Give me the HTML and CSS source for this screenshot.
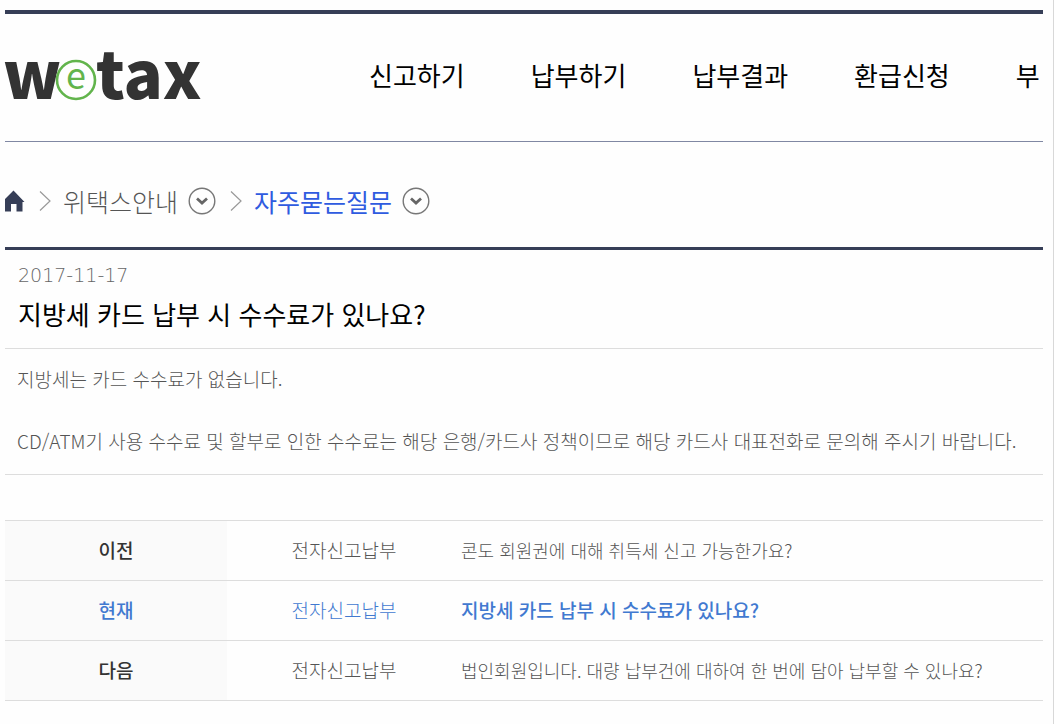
FILE: index.html
```html
<!DOCTYPE html>
<html lang="ko">
<head>
    <meta charset="UTF-8">
    <title>자주묻는질문 - wetax</title>
    <link rel="stylesheet" href="styles.css">
</head>
<body>
    <div class="page">
        <header class="header">
            <a href="#" class="logo" aria-label="wetax">
                <svg width="204" height="120" viewBox="0 0 204 120">
                    <text class="logo-dark" x="-2" y="81">w</text>
                    <circle cx="71" cy="62" r="20" fill="#fefefe"/>
                    <circle cx="71" cy="62" r="19" fill="none" stroke="#62b44c" stroke-width="2.600"/>
                    <text class="logo-e" x="71" y="71" text-anchor="middle">e</text>
                    <text class="logo-dark" x="91" y="81">tax</text>
                </svg>
            </a>
            <nav class="nav">
                <a href="#">신고하기</a>
                <a href="#">납부하기</a>
                <a href="#">납부결과</a>
                <a href="#">환급신청</a>
                <a href="#">부</a>
            </nav>
        </header>

        <nav class="path">
            <a href="#" class="home" aria-label="홈">
                <svg width="20" height="22" viewBox="0 0 20 22"><path d="M8.500 0.500L19.500 12H17.500V21.500H11.500V14H6V21.500H-1V10z" fill="#363e57"/></svg>
            </a>
            <svg class="sep" width="12" height="22" viewBox="0 0 12 22"><path d="M1 1.500L11 11L1 20.500" fill="none" stroke="#999" stroke-width="1.200"/></svg>
            <a href="#">위택스안내</a>
            <button type="button" class="more" aria-label="위택스안내 메뉴">
                <svg width="28" height="28" viewBox="0 0 28 28"><circle cx="14" cy="14" r="12.800" fill="none" stroke="#777" stroke-width="1.400"/><path d="M9 11.500L14 16L19 11.500" fill="none" stroke="#666" stroke-width="2.800"/></svg>
            </button>
            <svg class="sep" width="12" height="22" viewBox="0 0 12 22"><path d="M1 1.500L11 11L1 20.500" fill="none" stroke="#999" stroke-width="1.200"/></svg>
            <a href="#" class="on">자주묻는질문</a>
            <button type="button" class="more" aria-label="자주묻는질문 메뉴">
                <svg width="28" height="28" viewBox="0 0 28 28"><circle cx="14" cy="14" r="12.800" fill="none" stroke="#777" stroke-width="1.400"/><path d="M9 11.500L14 16L19 11.500" fill="none" stroke="#666" stroke-width="2.800"/></svg>
            </button>
        </nav>

        <main>
            <article class="view">
                <div class="view-head">
                    <p class="date">2017-11-17</p>
                    <h1>지방세 카드 납부 시 수수료가 있나요?</h1>
                </div>
                <div class="view-body">
                    <p>지방세는 카드 수수료가 없습니다.</p>
                    <p>CD/ATM기 사용 수수료 및 할부로 인한 수수료는 해당 은행/카드사 정책이므로 해당 카드사 대표전화로 문의해 주시기 바랍니다.</p>
                </div>
            </article>

            <table class="list">
                <tr>
                    <th scope="row">이전</th>
                    <td class="cate">전자신고납부</td>
                    <td><a href="#">콘도 회원권에 대해 취득세 신고 가능한가요?</a></td>
                </tr>
                <tr class="now">
                    <th scope="row">현재</th>
                    <td class="cate">전자신고납부</td>
                    <td><a href="#">지방세 카드 납부 시 수수료가 있나요?</a></td>
                </tr>
                <tr>
                    <th scope="row">다음</th>
                    <td class="cate">전자신고납부</td>
                    <td><a href="#">법인회원입니다. 대량 납부건에 대하여 한 번에 담아 납부할 수 있나요?</a></td>
                </tr>
            </table>
        </main>
    </div>
</body>
</html>
```
FILE: styles.css
```css
* { box-sizing: border-box; }
body { margin: 0; background: #fefefe; color: #555; font-family: "Noto Sans CJK KR", sans-serif; font-size: 19px; font-weight: 300; }
a { color: inherit; text-decoration: none; }
p, h1 { margin: 0; }

.page { min-height: 100vh; padding: 10px 10px 0 5px; border-right: 1px solid #d8d8d8; }

.header { display: flex; align-items: center; height: 132px; border-top: 4px solid #363e57; border-bottom: 1px solid #8088a3; }
.logo { flex: none; width: 204px; }
.logo svg { display: block; overflow: visible; }
.logo-dark { font-size: 65px; font-weight: 900; fill: #333; }
.logo-e { font-size: 36px; font-weight: 400; fill: #62b44c; }
.nav { display: flex; gap: 66px; margin: 0 0 6px 160px; color: #000; font-size: 26px; font-weight: 400; white-space: nowrap; }

.path { display: flex; align-items: center; height: 105px; padding-top: 12px; font-size: 25px; }
.path svg { display: block; }
.path .sep { margin: 0 12px 0 14px; }
.path .on { color: #2f5be0; font-weight: 400; }
.more { margin: 0 0 0 10px; padding: 0; border: 0; background: none; cursor: pointer; }

.view { border-top: 3px solid #363e57; border-bottom: 1px solid #ddd; }
.view-head { padding: 10px 13px; border-bottom: 1px solid #ddd; }
.date { color: #666; font-family: "DejaVu Sans", sans-serif; line-height: 30px; }
.view h1 { color: #000; font-size: 26px; font-weight: 400; line-height: 48px; }
.view-body { padding: 14px 12px 18px; line-height: 31px; }
.view-body p + p { margin-top: 31px; }

.list { width: 100%; margin-top: 45px; border-collapse: collapse; table-layout: fixed; }
.list th, .list td { height: 60px; padding: 0 0 2px; border-top: 1px solid #ddd; border-bottom: 1px solid #ddd; text-align: left; }
.list th { width: 222px; background: #fafafa; color: #333; font-weight: 500; text-align: center; }
.list .cate { width: 234px; text-align: center; }
.list a { font-size: 18px; }
.list .now th, .list .now td { color: #4179d0; }
.list .now a { font-size: 19px; font-weight: 500; }
```
